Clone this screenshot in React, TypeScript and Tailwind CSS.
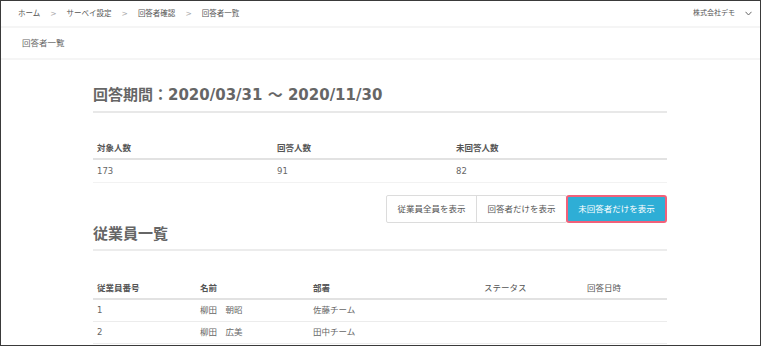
import React from "react";

const crumbs = ["ホーム", "サーベイ設定", "回答者確認", "回答者一覧"];

const employees = [
  { no: "1", name: "柳田　朝昭", dept: "佐藤チーム" },
  { no: "2", name: "柳田　広美", dept: "田中チーム" },
];

export default function App() {
  return (
    <div
      className="w-[761px] h-[346px] overflow-hidden border border-[#3a3a3a] bg-[#f5f5f5] flex flex-col gap-[2px] text-[#555]"
      style={{ fontFamily: '"DejaVu Sans", "Noto Sans CJK JP", sans-serif' }}
    >
      {/* Top bar */}
      <header className="h-[25px] shrink-0 bg-white flex items-center justify-between pl-[17px] pr-[8px] text-[7.5px]">
        <nav className="flex items-center">
          {crumbs.map((c, i) => (
            <React.Fragment key={c}>
              {i > 0 && <span className="text-[#aaa] px-[10px]">&gt;</span>}
              <span>{c}</span>
            </React.Fragment>
          ))}
        </nav>
        <div className="flex items-center gap-[10px] text-[7px]">
          <span>株式会社デモ</span>
          <svg width="7" height="5" viewBox="0 0 7 5" className="text-[#666]">
            <polyline points="0.5,0.8 3.5,4 6.5,0.8" fill="none" stroke="currentColor" strokeWidth="1" />
          </svg>
        </div>
      </header>

      {/* Page title bar */}
      <div className="h-[30px] shrink-0 bg-white flex items-center pl-[21px] text-[8.5px] text-[#666]">
        回答者一覧
      </div>

      {/* Main */}
      <main className="flex-1 bg-white pl-[92px] pt-[25px]">
        <div className="w-[574px]">
          <h1 className="text-[15px] leading-[20px] font-bold text-[#666] pb-[6px] border-b-2 border-[#e8e8e8]">
            回答期間：2020/03/31 ～ 2020/11/30
          </h1>

          {/* Summary */}
          <div className="mt-[25px] text-[8.5px] text-[#666]">
            <div className="flex h-[22px] items-center border-b-2 border-[#e2e2e2] font-bold text-[#555]">
              <div className="w-[180px] pl-[4px]">対象人数</div>
              <div className="w-[179px] pl-[4px]">回答人数</div>
              <div className="flex-1 pl-[4px]">未回答人数</div>
            </div>
            <div className="flex h-[23px] items-center border-b border-[#f2f2f2]">
              <div className="w-[180px] pl-[4px]">173</div>
              <div className="w-[179px] pl-[4px]">91</div>
              <div className="flex-1 pl-[4px]">82</div>
            </div>
          </div>

          {/* Filter buttons */}
          <div className="flex justify-end mt-[12px] text-[8.5px]">
            <div className="flex h-[28px] border border-[#dcdcdc] rounded-[2px] bg-white">
              <button className="w-[90px] border-r border-[#dcdcdc] text-[#555]">従業員全員を表示</button>
              <button className="w-[89px] text-[#555]">回答者だけを表示</button>
            </div>
            <button className="w-[101px] h-[28px] -ml-px rounded-[3px] border-2 border-[#f2607a] bg-[#2eaed6] text-white">
              未回答者だけを表示
            </button>
          </div>

          <h2 className="mt-px text-[15px] leading-[20px] font-bold text-[#666] pb-[5px] border-b-2 border-[#ececec]">
            従業員一覧
          </h2>

          {/* Employee table */}
          <div className="mt-[27px] text-[8.5px] text-[#666]">
            <div className="flex h-[22px] items-center border-b-2 border-[#e2e2e2] font-bold text-[#555]">
              <div className="w-[103px] pl-[4px]">従業員番号</div>
              <div className="w-[113px] pl-[4px]">名前</div>
              <div className="w-[171px] pl-[4px]">部署</div>
              <div className="w-[103px] pl-[4px] font-normal">ステータス</div>
              <div className="flex-1 pl-[4px] font-normal">回答日時</div>
            </div>
            {employees.map((e) => (
              <div key={e.no} className="flex h-[22px] items-center border-b border-[#ececec]">
                <div className="w-[103px] pl-[4px]">{e.no}</div>
                <div className="w-[113px] pl-[4px]">{e.name}</div>
                <div className="w-[171px] pl-[4px]">{e.dept}</div>
                <div className="w-[103px] pl-[4px]"></div>
                <div className="flex-1 pl-[4px]"></div>
              </div>
            ))}
          </div>
        </div>
      </main>
    </div>
  );
}
